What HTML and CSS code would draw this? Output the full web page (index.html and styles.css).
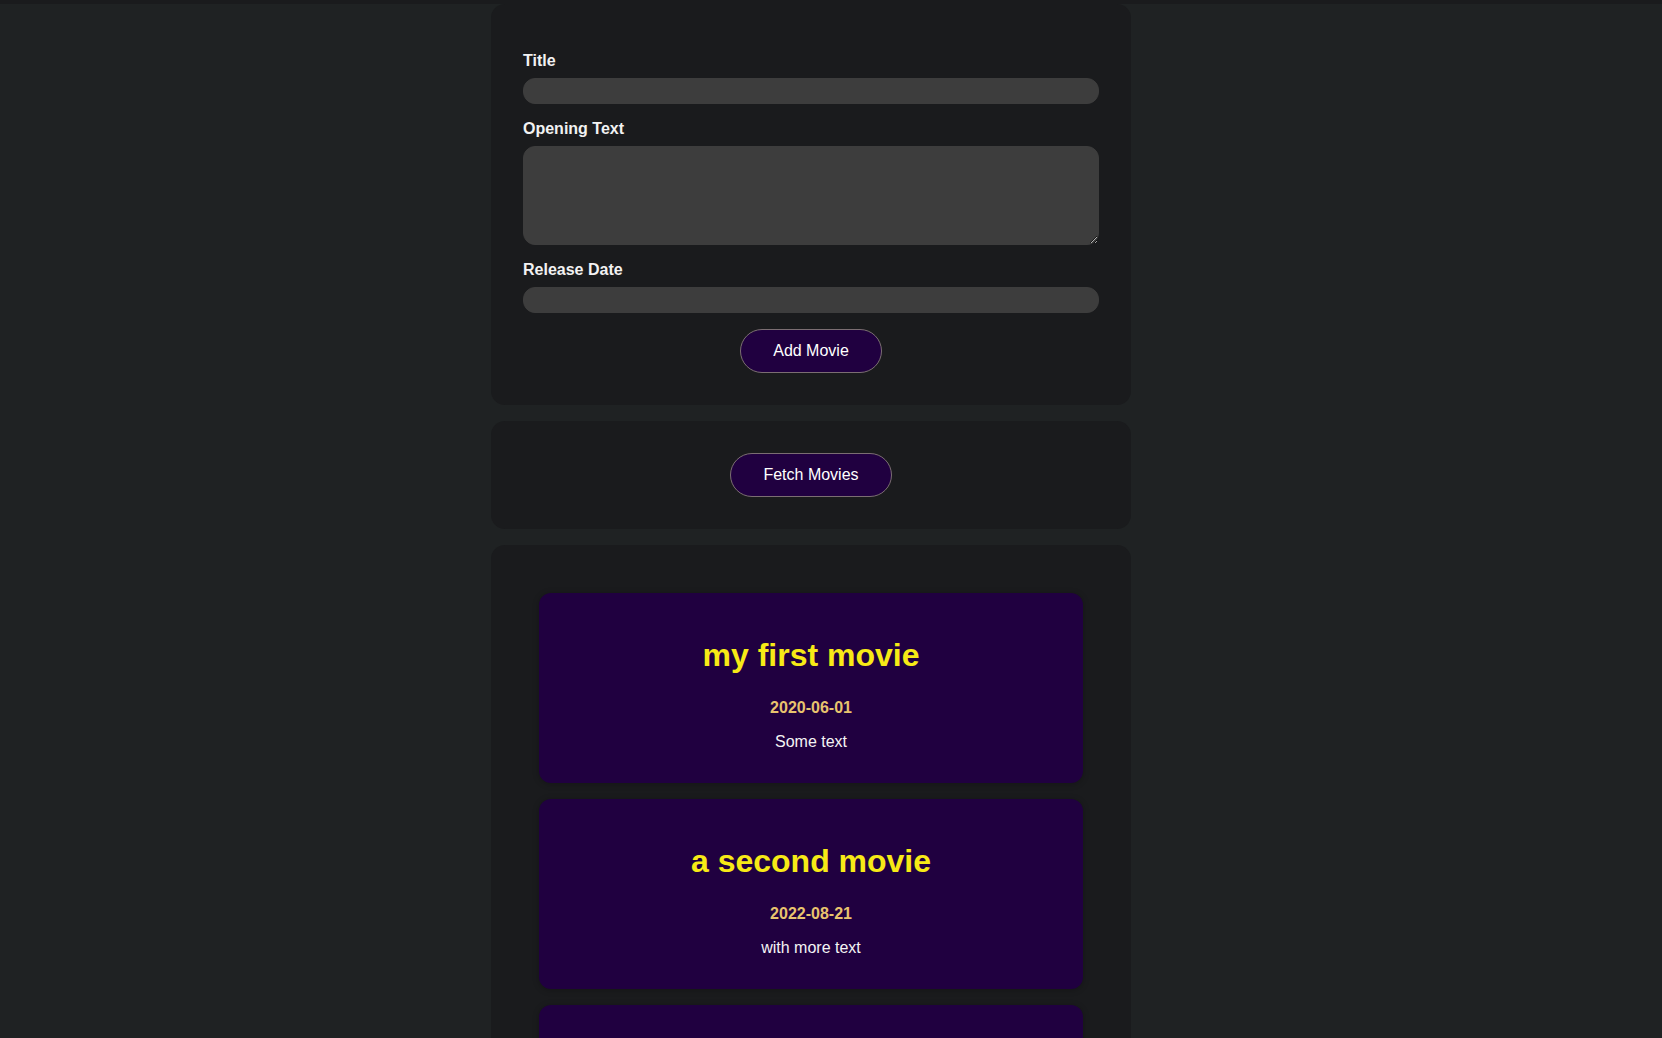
FILE: index.html
```html
<!DOCTYPE html>
<html lang="en">
<head>
<meta charset="utf-8">
<title>Movies</title>
<link rel="stylesheet" href="styles.css">
</head>
<body>
<div class="app">
  <section class="panel">
    <form class="movie-form">
      <div class="control">
        <label for="title">Title</label>
        <input type="text" id="title" class="field">
      </div>
      <div class="control">
        <label for="opening-text">Opening Text</label>
        <textarea id="opening-text" class="field field-area"></textarea>
      </div>
      <div class="control">
        <label for="date">Release Date</label>
        <input type="text" id="date" class="field">
      </div>
      <div class="actions">
        <button type="button" class="btn">Add Movie</button>
      </div>
    </form>
  </section>
  <section class="panel panel-center">
    <button type="button" class="btn">Fetch Movies</button>
  </section>
  <section class="panel">
    <ul class="movies-list">
      <li class="movie">
        <h2 class="movie-title">my first movie</h2>
        <h3 class="movie-date">2020-06-01</h3>
        <p class="movie-text">Some text</p>
      </li>
      <li class="movie">
        <h2 class="movie-title">a second movie</h2>
        <h3 class="movie-date">2022-08-21</h3>
        <p class="movie-text">with more text</p>
      </li>
      <li class="movie">
        <h2 class="movie-title">a third movie</h2>
        <h3 class="movie-date">2023-01-10</h3>
        <p class="movie-text">and even more text</p>
      </li>
    </ul>
  </section>
</div>
</body>
</html>
```

FILE: styles.css
```css
* {
  box-sizing: border-box;
}

html {
  font-family: "Liberation Sans", Arial, sans-serif;
}

body {
  margin: 0;
  padding: 0 40px 0 0;
  background: #1f2223;
  border-top: 4px solid #1a1b1d;
  color: #ffffff;
}

.app {
  width: 640px;
  margin: 0 auto;
}

.panel {
  background: #1a1b1d;
  border-radius: 14px;
  padding: 32px;
  margin: 0 0 16px 0;
}

.panel-center {
  text-align: center;
}

.control {
  margin: 16px 0;
}

.control label {
  display: block;
  font-weight: bold;
  font-size: 16px;
  color: #f2f2f2;
  margin-bottom: 8px;
}

.field {
  display: block;
  width: 100%;
  height: 26px;
  font: inherit;
  color: #ffffff;
  background: #3d3d3d;
  border: 1px solid #3d3d3d;
  border-radius: 12px;
  padding: 4px 12px;
}

.field-area {
  height: 99px;
  resize: vertical;
}

.actions {
  text-align: center;
}

.btn {
  font: inherit;
  font-size: 16px;
  color: #ffffff;
  background: #200040;
  border: 1px solid #7b6e72;
  border-radius: 22px;
  padding: 12px 32px;
  line-height: 18px;
  cursor: pointer;
}

.movies-list {
  list-style: none;
  margin: 0;
  padding: 0;
}

.movie {
  margin: 16px;
  padding: 16px;
  background: #200040;
  border-radius: 12px;
  text-align: center;
  box-shadow: 0 1px 6px rgba(0, 0, 0, 0.25);
}

.movie-title {
  font-size: 32px;
  font-weight: bold;
  color: #f7ea16;
  margin: 28px 0 25px;
}

.movie-date {
  font-size: 16px;
  font-weight: bold;
  color: #e8c46e;
  margin: 0;
}

.movie-text {
  font-size: 16px;
  color: #f4f4f4;
  margin: 16px 0;
}
```
